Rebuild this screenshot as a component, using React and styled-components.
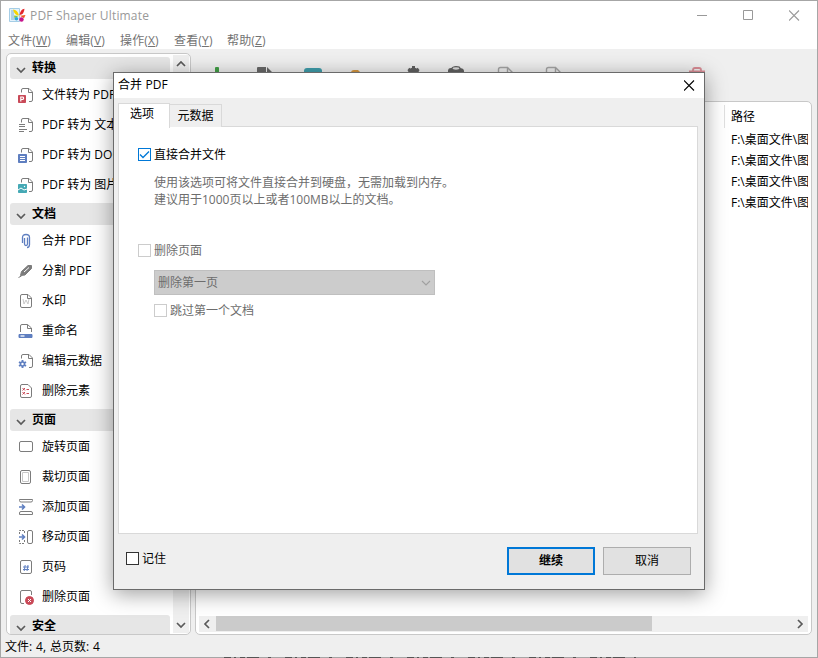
import styled, { createGlobalStyle, css } from "styled-components";

const colors = {
  accent: "#0078d7",
  face: "#efefef",
  line: "#c8c8c8",
  icon: "#7c7c7c",
  blue: "#5f7fc0",
  red: "#c94a58",
  teal: "#45a9b5",
};

const GlobalStyle = createGlobalStyle`
  * {
    box-sizing: border-box;
  }

  body {
    margin: 0;
    overflow: hidden;
    font-family: "Open Sans", "Noto Sans CJK SC", sans-serif;
    font-size: 12px;
    line-height: 16px;
    color: #000;
  }

  svg {
    display: block;
    flex: none;
  }
`;

const Window = styled.div`
  position: relative;
  display: flex;
  flex-direction: column;
  width: 818px;
  height: 658px;
  border: 1px solid #a6a6a6;
  background: ${colors.face};
  white-space: nowrap;
`;

const TitleBar = styled.header`
  display: flex;
  align-items: center;
  height: 29px;
  padding-left: 8px;
  background: #fff;
`;

const AppName = styled.h1`
  flex: 1;
  margin: 0 0 0 4px;
  font-size: 12px;
  font-weight: 400;
  letter-spacing: 0.17px;
  color: #999;
`;

const WindowButtons = styled.div`
  display: flex;
  gap: 35px;
  padding-right: 17px;
`;

const MenuBar = styled.nav`
  display: flex;
  align-items: center;
  height: 19px;
  padding: 3px 0 0 7px;
  background: #fff;
`;

const MenuItem = styled.span`
  width: ${({ $width }) => $width}px;
  color: #737373;
  letter-spacing: 0.15px;
`;

const Content = styled.div`
  display: flex;
  gap: 4px;
  height: 587px;
  padding: 4px 5px 0;
`;

const panel = css`
  border: 1px solid ${colors.line};
  border-radius: 5px;
  background: #fff;
  overflow: hidden;
`;

const SideBar = styled.aside`
  ${panel}
  display: flex;
  width: 185px;
  height: 582px;
`;

const Groups = styled.div`
  width: 166px;
  padding: 3px 3px 0;
  overflow: hidden;
`;

const GroupHeader = styled.h2`
  display: flex;
  align-items: center;
  gap: 6px;
  height: 22px;
  margin: 0 0 1px;
  padding-left: 6px;
  border-radius: 3px;
  background: #e6e6e6;
  font-size: 12px;
  font-weight: 700;

  svg {
    margin-top: 3px;
  }
`;

const GroupItems = styled.ul`
  margin: 0 0 3px;
  padding: 0;
  list-style: none;
`;

const GroupItem = styled.li`
  display: flex;
  align-items: center;
  gap: 8px;
  height: 30px;
  padding-left: 8px;
`;

const VerticalScroll = styled.div`
  display: flex;
  flex-direction: column;
  justify-content: space-between;
  align-items: center;
  width: 16px;
  margin: 1px 0 1px;
  padding: 4px 0 3px;
  background: ${colors.face};
`;

const Main = styled.main`
  display: flex;
  flex-direction: column;
  width: 617px;
`;

const ToolBar = styled.div`
  display: flex;
  height: 48px;
  padding: 9px 0 0 13px;
`;

const Tool = styled.div`
  width: 48px;
  opacity: ${({ $disabled }) => ($disabled ? 0.6 : 1)};
`;

const FileTable = styled.section`
  ${panel}
  display: flex;
  flex-direction: column;
  justify-content: space-between;
  height: 534px;
  padding: 3px 3px 2px;
`;

const PathColumn = styled.div`
  width: 84px;
  margin-left: auto;
  overflow: hidden;
`;

const ColumnTitle = styled.div`
  height: 23px;
  padding: 4px 0 0 6px;
  border-left: 1px solid #e0e0e0;
`;

const PathCell = styled.div`
  height: 21px;
  padding: 4px 0 0 7px;
`;

const HorizontalScroll = styled.div`
  display: flex;
  align-items: center;
  justify-content: space-between;
  height: 16px;
  padding: 0 3px;
  background: ${colors.face};
`;

const Thumb = styled.div`
  width: 436px;
  height: 15px;
  margin: 0 auto 1px 4px;
  background: #cbcbcb;
`;

const StatusBar = styled.footer`
  display: flex;
  align-items: center;
  height: 20px;
  padding: 2px 0 0 4px;
  word-spacing: 0.8px;
`;

const Dialog = styled.div`
  position: absolute;
  top: 71px;
  left: 112px;
  display: flex;
  flex-direction: column;
  width: 592px;
  height: 518px;
  border: 1px solid #6a6a6a;
  background: ${colors.face};
  box-shadow: 0 4px 20px rgba(0, 0, 0, 0.38);
`;

const DialogTitle = styled.div`
  display: flex;
  justify-content: space-between;
  align-items: center;
  height: 25px;
  padding: 0 9px 1px 4px;
  background: #fff;
  letter-spacing: 0.1px;
`;

const Tabs = styled.div`
  display: flex;
  align-items: flex-end;
  height: 29px;
  padding: 0 4px;
`;

const Tab = styled.div`
  width: 52px;
  height: ${({ $active }) => ($active ? 25 : 23)}px;
  margin-bottom: ${({ $active }) => ($active ? -1 : 0)}px;
  padding-top: 3px;
  border: 1px solid #d9d9d9;
  border-bottom: 0;
  border-left-width: ${({ $active }) => ($active ? 1 : 0)}px;
  background: ${({ $active }) => ($active ? "#fff" : colors.face)};
  text-align: center;
  z-index: 1;
  ${({ $active }) => $active && "padding: 2px 4px 0 0;"}
`;

const TabPage = styled.div`
  height: 408px;
  margin: -1px 6px 0 4px;
  padding: 21px 0 0 19px;
  border: 1px solid #d9d9d9;
  background: #fff;
`;

const Check = styled.label`
  display: flex;
  align-items: center;
  gap: 3px;
  height: 13px;
  color: ${({ $disabled }) => ($disabled ? "#6d6d6d" : "#000")};
`;

const Box = styled.span`
  width: 13px;
  height: 13px;
  border: 1px solid ${({ $color }) => $color};
  background: #fff;
`;

const Hint = styled.p`
  margin: 13px 0 36px 16px;
  line-height: 17px;
  color: #6d6d6d;
`;

const Select = styled.div`
  display: flex;
  justify-content: space-between;
  align-items: center;
  width: 281px;
  height: 25px;
  margin: 13px 0 9px 16px;
  padding: 0 3px;
  border: 1px solid #bfbfbf;
  background: #ccc;
  color: #6d6d6d;
`;

const Nested = styled.div`
  margin-left: 16px;
`;

const DialogFooter = styled.div`
  display: flex;
  align-items: flex-start;
  gap: 8px;
  padding: 13px 13px 0 12px;
`;

const Remember = styled.div`
  flex: 1;
  padding-top: 5px;
`;

const Button = styled.button`
  width: 88px;
  height: 28px;
  padding: 0;
  border: ${({ $primary }) => ($primary ? `2px solid ${colors.accent}` : "1px solid #adadad")};
  background: #e1e1e1;
  font: inherit;
  font-weight: ${({ $primary }) => ($primary ? 700 : 400)};
  color: #000;
`;

const BottomEdge = styled.svg`
  position: absolute;
  left: 223px;
  bottom: -1px;
`;

const directions = {
  down: "M1 3l4 4 4-4",
  up: "M1 7l4-4 4 4",
  left: "M7 1L3 5l4 4",
  right: "M3 1l4 4-4 4",
};

function Chevron({ to = "down", color = "#5a5a5a", width = 1.7 }) {
  return (
    <svg width="10" height="10" viewBox="0 0 10 10" fill="none" stroke={color} strokeWidth={width}>
      <path d={directions[to]} />
    </svg>
  );
}

function Cross({ color }) {
  return (
    <svg width="11" height="11" viewBox="0 0 11 11" stroke={color} strokeWidth="1.1">
      <path d="M0 .5l10 10M10 .5l-10 10" />
    </svg>
  );
}

function Logo() {
  return (
    <svg width="17" height="15" viewBox="0 0 17 15">
      <path d="M.5 .5h10v13h-10z" fill="#e4f2fb" stroke="#a5cde6" />
      <path d="M2 3h3M2 5h3M2 7h3M2 9h3M2 11h4" stroke="#7db0d4" />
      <path d="M4 1.500q4.500 0 6 6-4.500 0-6-6z" fill="#f7d600" />
      <path d="M15.500 .8q-4 .5-5 6.200 4.500 0 5-6.200z" fill="#e3262b" />
      <path d="M5 7.500l4.500 .5-4 2.200z" fill="#8cc63f" />
      <path d="M11 7.700l5.500-.7-1.500 3.200z" fill="#f05a1f" />
      <circle cx="7.500" cy="10.800" r="1.800" fill="#28a9df" />
      <circle cx="12.500" cy="11.500" r="2.200" fill="#c5168c" />
    </svg>
  );
}

const dogEar = <path d="M3.500 5.500V3q0-1.500 1.500-1.500h6L14.500 5v8q0 1.500-1.500 1.500h-2M10.500 1.500V5.500h4" />;

const icons = {
  toPdf: (
    <>
      {dogEar}
      <path d="M.5 8.500h7v7h-7z" fill={colors.red} stroke={colors.red} />
      <path d="M2.800 14.500V10h2q1.600 1.300 0 2.500h-2" stroke="#fff" strokeWidth="1.200" />
    </>
  ),
  toText: (
    <>
      {dogEar}
      <path d="M1 7.500h6M1 9.500h6M1 12.500h8M1 14.500h5" />
    </>
  ),
  toDoc: (
    <>
      {dogEar}
      <path d="M.5 7.500h8v8h-8z" fill={colors.blue} stroke={colors.blue} />
      <path d="M2 9.500h5M2 11.500h5M2 13.500h5" stroke="#fff" />
    </>
  ),
  toImage: (
    <>
      {dogEar}
      <path d="M.5 7.500h8v8h-8z" fill={colors.teal} stroke={colors.teal} />
      <path d="M0 13l3-2 3 2 3-1" stroke="#fff" />
      <circle cx="6.500" cy="9.500" r=".7" fill="#fff" stroke="none" />
    </>
  ),
  clip: (
    <path
      d="M6.500 5v6q0 1.500 1.500 1.500t1.500-1.500V4.500M4.500 10V4.500q0-3 3.500-3t3.500 3V11.500q0 3-2.500 3"
      stroke={colors.blue}
      strokeWidth="1.300"
    />
  ),
  knife: (
    <>
      <path d="M2.500 12.500l1-4 6.500-6h3.500V5.500L7 12z" fill={colors.icon} />
      <path d="M6 9l5-4.500" stroke="#fff" />
      <path d="M.5 14.500l3-1.500" />
    </>
  ),
  watermark: (
    <>
      <path d="M4 1.500h6L13.500 5v8q0 1.500-1.500 1.500H4q-1.500 0-1.500-1.500V3Q2.500 1.500 4 1.500zM9.500 1.500V5.500h4" />
      <path d="M5 6l1 5 2-4 2 4 1-5" stroke="#c9c9c9" />
    </>
  ),
  rename: (
    <>
      <path d="M2.500 9V3q0-1.500 1.500-1.500h5.500L13.500 5v4M9.500 1.500V5.500h4" />
      <path d="M1 11.500h13v3H1z" fill={colors.blue} stroke={colors.blue} />
      <path d="M2.500 13h4" stroke="#fff" strokeWidth="1.300" />
    </>
  ),
  metadata: (
    <>
      {dogEar}
      <path d="M4.500 7v8M1 9l7 4M1 13l7-4" stroke={colors.blue} strokeWidth="1.900" />
      <circle cx="4.500" cy="11" r="2" fill="#fff" stroke={colors.blue} strokeWidth="1.600" />
    </>
  ),
  elements: (
    <>
      <path d="M4 1.500h6L13.500 5v8q0 1.500-1.500 1.500H4q-1.500 0-1.500-1.500V3Q2.500 1.500 4 1.500z" />
      <path d="M4.500 5l2.500 2.500M7 5L4.500 7.500M4.500 9l2.500 2.500M7 9l-2.500 2.500M8.500 6.500H11M8.500 10.500H11" stroke={colors.red} />
    </>
  ),
  rotate: <rect x="1.500" y="2.500" width="13" height="10" rx="1.500" />,
  crop: (
    <>
      <rect x="2.500" y="1.500" width="10" height="13" rx="1.500" />
      <path d="M4.500 3.500h6v9h-6z" stroke="#c8c8c8" />
    </>
  ),
  add: (
    <>
      <path d="M1.500 .5v1q0 1.500 1.500 1.500h10q1.500 0 1.500-1.500v-1zM1.500 15.500v-1.500q0-1.500 1.500-1.500h10q1.500 0 1.500 1.500v1.500z" />
      <path d="M1 8h5M4 5.500L6.500 8 4 10.500" stroke={colors.blue} strokeWidth="1.600" />
    </>
  ),
  move: (
    <>
      <path d="M1.500 5V1.500H7M1.500 11v3.500H7M6.500 2v3M6.500 11v3" strokeDasharray="2 1" />
      <rect x="9.500" y="1.500" width="5" height="13" rx="1.500" />
      <path d="M1 8h5M4 5.500L6.500 8 4 10.500" stroke={colors.blue} strokeWidth="1.600" />
    </>
  ),
  number: (
    <>
      <rect x="2.500" y="1.500" width="11" height="13" rx="1.500" />
      <path d="M7.200 6l-1 6M10 6l-1 6M5 8h6M5 10.500h6" stroke={colors.blue} />
    </>
  ),
  remove: (
    <>
      <path d="M6 14.500H4q-1.500 0-1.500-1.500V3Q2.500 1.500 4 1.500h8q1.500 0 1.500 1.500v3" />
      <circle cx="11.500" cy="11.500" r="4" fill={colors.red} stroke={colors.red} />
      <path d="M10 10l3 3M13 10l-3 3" stroke="#fff" />
    </>
  ),
};

function ItemIcon({ name }) {
  return (
    <svg width="16" height="16" viewBox="0 0 16 16" fill="none" stroke={colors.icon} strokeWidth="1">
      {icons[name]}
    </svg>
  );
}

const groups = [
  {
    title: "转换",
    items: [
      ["toPdf", "文件转为 PDF"],
      ["toText", "PDF 转为 文本"],
      ["toDoc", "PDF 转为 DOCX"],
      ["toImage", "PDF 转为 图片"],
    ],
  },
  {
    title: "文档",
    items: [
      ["clip", "合并 PDF"],
      ["knife", "分割 PDF"],
      ["watermark", "水印"],
      ["rename", "重命名"],
      ["metadata", "编辑元数据"],
      ["elements", "删除元素"],
    ],
  },
  {
    title: "页面",
    items: [
      ["rotate", "旋转页面"],
      ["crop", "裁切页面"],
      ["add", "添加页面"],
      ["move", "移动页面"],
      ["number", "页码"],
      ["remove", "删除页面"],
    ],
  },
  { title: "安全", items: [] },
];

const menus = [
  ["文件", "W", 58],
  ["编辑", "V", 54],
  ["操作", "X", 54],
  ["查看", "Y", 53],
  ["帮助", "Z", 53],
];

const paths = ["F:\\桌面文件\\图", "F:\\桌面文件\\图", "F:\\桌面文件\\图", "F:\\桌面文件\\图"];

const outlinePage = (
  <path d="M2.500 24V7.500q0-2 2-2h7l6 6V24M11.500 5.500v6h6" fill="none" stroke="#737373" strokeWidth="1.400" />
);

const tools = [
  { drawing: <path d="M7 6q0-1 1-1h2q1 0 1 1v16H7z" fill="#43a047" /> },
  { drawing: <path d="M1 6q0-1 1-1h8v6h6v12H1zM11 5l5.500 5.500H11z" fill="#686868" /> },
  { drawing: <path d="M0 9q0-3 3-3h12q3 0 3 3v12H0z" fill="#3f9dab" /> },
  { drawing: <path d="M-1 11q0-3 3-3h4l2 2h7v11H-1z" fill="#d6963f" /> },
  {
    drawing: (
      <>
        <path d="M13.500 4v14M8.300 7l10.400 8M18.700 7L8.300 15" stroke="#606060" strokeWidth="3" />
        <circle cx="13.500" cy="11" r="4" fill="none" stroke="#606060" strokeWidth="3" />
      </>
    ),
  },
  {
    drawing: (
      <>
        <path d="M0 9q0-3 3-3h8q5 0 5 3v14H0z" fill="#606060" />
        <ellipse cx="8" cy="6.500" rx="4" ry="1.800" fill="#ddd" stroke="#606060" strokeWidth="1.300" />
      </>
    ),
  },
  { disabled: true, drawing: outlinePage },
  { disabled: true, drawing: outlinePage },
  { disabled: true, drawing: <path d="M8 10h2v2H8z" fill="#737373" /> },
  { drawing: null },
  {
    disabled: true,
    drawing: <path d="M1 9.500h16M5 9V8q0-2 2-2h4q2 0 2 2v1" fill="none" stroke="#c94a58" strokeWidth="1.800" />,
  },
];

function App() {
  return (
    <>
      <GlobalStyle />
      <Window>
        <TitleBar>
          <Logo />
          <AppName>PDF Shaper Ultimate</AppName>
          <WindowButtons>
            <svg width="11" height="11" viewBox="0 0 11 11" stroke="#999">
              <path d="M0 5.500h10" />
            </svg>
            <svg width="11" height="11" viewBox="0 0 11 11" fill="none" stroke="#999">
              <path d="M.5 .5h9v9h-9z" />
            </svg>
            <Cross color="#999" />
          </WindowButtons>
        </TitleBar>
        <MenuBar>
          {menus.map(([label, key, width]) => (
            <MenuItem key={key} $width={width}>
              {label}(<u>{key}</u>)
            </MenuItem>
          ))}
        </MenuBar>
        <Content>
          <SideBar>
            <Groups>
              {groups.map((group) => (
                <div key={group.title}>
                  <GroupHeader>
                    <Chevron />
                    {group.title}
                  </GroupHeader>
                  <GroupItems>
                    {group.items.map(([icon, label]) => (
                      <GroupItem key={icon}>
                        <ItemIcon name={icon} />
                        {label}
                      </GroupItem>
                    ))}
                  </GroupItems>
                </div>
              ))}
            </Groups>
            <VerticalScroll>
              <Chevron to="up" />
              <Chevron />
            </VerticalScroll>
          </SideBar>
          <Main>
            <ToolBar>
              {tools.map((tool, index) => (
                <Tool key={index} $disabled={tool.disabled}>
                  <svg width="24" height="24" viewBox="0 0 24 24" overflow="visible">
                    {tool.drawing}
                  </svg>
                </Tool>
              ))}
            </ToolBar>
            <FileTable>
              <PathColumn>
                <ColumnTitle>路径</ColumnTitle>
                {paths.map((path, index) => (
                  <PathCell key={index}>{path}</PathCell>
                ))}
              </PathColumn>
              <HorizontalScroll>
                <Chevron to="left" />
                <Thumb />
                <Chevron to="right" />
              </HorizontalScroll>
            </FileTable>
          </Main>
        </Content>
        <StatusBar>文件: 4, 总页数: 4</StatusBar>
        <BottomEdge width="412" height="1" viewBox="0 0 412 1">
          <path d="M0 .5h412" stroke="#555" strokeDasharray="7 3 2 4 5 2 12 9 3 14" />
        </BottomEdge>

        <Dialog>
          <DialogTitle>
            合并 PDF
            <Cross color="#000" />
          </DialogTitle>
          <Tabs>
            <Tab $active>选项</Tab>
            <Tab>元数据</Tab>
          </Tabs>
          <TabPage>
            <Check>
              <Box $color={colors.accent}>
                <svg width="11" height="11" viewBox="0 0 11 11" fill="none" stroke={colors.accent} strokeWidth="1.300">
                  <path d="M1 5.500L4 8.500l6-6" />
                </svg>
              </Box>
              直接合并文件
            </Check>
            <Hint>
              使用该选项可将文件直接合并到硬盘，无需加载到内存。
              <br />
              建议用于1000页以上或者100MB以上的文档。
            </Hint>
            <Check $disabled>
              <Box $color="#ccc" />
              删除页面
            </Check>
            <Select>
              删除第一页
              <Chevron color="#a0a0a0" width={1.1} />
            </Select>
            <Nested>
              <Check $disabled>
                <Box $color="#ccc" />
                跳过第一个文档
              </Check>
            </Nested>
          </TabPage>
          <DialogFooter>
            <Remember>
              <Check>
                <Box $color="#333" />
                记住
              </Check>
            </Remember>
            <Button $primary>继续</Button>
            <Button>取消</Button>
          </DialogFooter>
        </Dialog>
      </Window>
    </>
  );
}

export default App;
